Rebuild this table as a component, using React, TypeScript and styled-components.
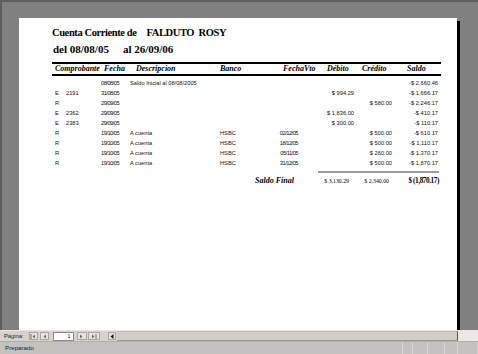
import React from "react";
import styled, { createGlobalStyle } from "styled-components";

const GlobalStyle = createGlobalStyle`
  html, body {
    margin: 0;
    padding: 0;
  }
  body {
    width: 478px;
    height: 354px;
    overflow: hidden;
    background: #808080;
  }
`;

const serif = `"Times New Roman", "Liberation Serif", Times, serif`;
const sans = `"Liberation Sans", Arial, sans-serif`;

const cols = "48px 28px 87px 47px 56px 38px 39px 46px";

const Window = styled.div`
  width: 478px;
  height: 354px;
  display: flex;
  flex-direction: column;
  overflow: hidden;
`;

const Viewer = styled.div`
  flex: 1;
  min-height: 0;
  background: #808080;
  border-top: 2px solid #5e5e5e;
  border-left: 2px solid #5e5e5e;
  padding: 16px 0 0 17px;
  overflow: hidden;
`;

const Page = styled.div`
  width: 438px;
  height: 560px;
  box-sizing: border-box;
  background: #fff;
  box-shadow: 3px 3px 0 #000;
  padding: 7px 0 0 33px;
  color: #000;
`;

const TitleLine = styled.div<{ $indent?: number; $size?: number; $spacing?: number }>`
  display: flex;
  font-family: ${serif};
  font-weight: 700;
  font-size: ${(p) => p.$size ?? 11}px;
  letter-spacing: ${(p) => p.$spacing ?? 0}px;
  line-height: 16px;
  white-space: pre;
  padding-left: ${(p) => p.$indent ?? 0}px;
`;

const Gap = styled.span<{ $w: number }>`
  display: inline-block;
  width: ${(p) => p.$w}px;
`;

const Table = styled.div`
  width: 389px;
  margin-top: 5px;
`;

const HeaderRow = styled.div`
  display: grid;
  grid-template-columns: ${cols};
  height: 10px;
  border-top: 2px solid #000;
  border-bottom: 2px solid #000;
  font-family: ${serif};
  font-style: italic;
  font-weight: 700;
  font-size: 8px;
  line-height: 10px;
  white-space: nowrap;
`;

const HeadCell = styled.div<{ $pad: number }>`
  padding-left: ${(p) => p.$pad}px;
`;

const Body = styled.div`
  padding-top: 2px;
`;

const Row = styled.div`
  display: grid;
  grid-template-columns: ${cols};
  height: 10px;
  font-family: ${sans};
  font-size: 5.7px;
  line-height: 10px;
  white-space: nowrap;
  color: #111;
`;

const Cell = styled.div<{ $left?: number; $right?: number; $tight?: boolean }>`
  display: flex;
  justify-content: ${(p) => (p.$right !== undefined ? "flex-end" : "flex-start")};
  padding-left: ${(p) => p.$left ?? 0}px;
  padding-right: ${(p) => p.$right ?? 0}px;
  letter-spacing: ${(p) => (p.$tight ? "-0.5px" : "0")};
`;

const Kind = styled.span`
  display: inline-block;
  width: 11px;
`;

const Totals = styled.div`
  display: grid;
  grid-template-columns: ${cols};
  margin-top: 3px;
`;

const Rule = styled.div`
  grid-column: 6 / 9;
  height: 2px;
  margin-right: 2px;
  background: #9c9c9c;
`;

const TotalCell = styled.div<{ $span?: string; $right: number; $bold?: boolean }>`
  grid-column: ${(p) => p.$span ?? "auto"};
  display: flex;
  justify-content: flex-end;
  padding-right: ${(p) => p.$right}px;
  height: 16px;
  font-family: ${serif};
  font-weight: ${(p) => (p.$bold ? 700 : 400)};
  font-size: ${(p) => (p.$bold ? 7.2 : 5.8)}px;
  letter-spacing: ${(p) => (p.$bold ? -0.4 : 0)}px;
  line-height: 16px;
  white-space: nowrap;
`;

const FinalLabel = styled(TotalCell)`
  font-style: italic;
  font-weight: 700;
  font-size: 8px;
  letter-spacing: 0;
`;

const NavBar = styled.div`
  height: 11px;
  flex: none;
  display: flex;
  align-items: center;
  background: #d6d3ce;
  border-top: 1px solid #e9e7e3;
  box-sizing: border-box;
  font-family: ${sans};
  font-size: 5.8px;
  color: #222;
`;

const NavLabel = styled.span`
  padding: 0 4px;
`;

const NavButton = styled.div<{ $w?: number; $ml?: number }>`
  width: ${(p) => p.$w ?? 9}px;
  height: 8px;
  margin-left: ${(p) => p.$ml ?? 1}px;
  box-sizing: border-box;
  border: 1px solid #a9a6a0;
  background: #e6e4e0;
  display: flex;
  align-items: center;
  justify-content: center;
`;

const PageBox = styled.div`
  width: 21px;
  height: 9px;
  margin-left: 4px;
  box-sizing: border-box;
  border: 1px solid #8a8a8a;
  background: #fff;
  display: flex;
  align-items: center;
  justify-content: flex-end;
  padding-right: 2px;
  font-size: 5.5px;
`;

const ScrollTrack = styled.div`
  flex: 1;
  align-self: stretch;
  margin-left: 1px;
  border-top: 1px solid #bdbab4;
  border-bottom: 1px solid #9c9a95;
  border-right: 1px solid #55534f;
  background: #d0cdc8;
`;

const Corner = styled.div`
  width: 20px;
  align-self: stretch;
  background: #ebe9e6;
`;

const StatusBar = styled.div`
  height: 13px;
  flex: none;
  display: flex;
  background: #c4c2be;
  border-top: 1px solid #b0aea9;
  box-sizing: border-box;
  font-family: ${sans};
  font-size: 6.2px;
  line-height: 12px;
  color: #222;
`;

const StatusPanel = styled.div<{ $w?: number }>`
  ${(p) => (p.$w ? `width: ${p.$w}px;` : "flex: 1;")}
  padding-left: 5px;
  box-sizing: border-box;
  border-right: 1px solid #d8d6d2;
`;

type Mov = {
  kind: string;
  num: string;
  fecha: string;
  desc: string;
  banco: string;
  vto: string;
  debito: string;
  credito: string;
  saldo: string;
};

const rows: Mov[] = [
  { kind: "", num: "", fecha: "08/08/05", desc: "Saldo Inicial al 08/08/2005", banco: "", vto: "", debito: "", credito: "", saldo: "-$ 2,660.46" },
  { kind: "E", num: "2191", fecha: "31/08/05", desc: "", banco: "", vto: "", debito: "$ 994.29", credito: "", saldo: "-$ 1,666.17" },
  { kind: "R", num: "", fecha: "29/09/05", desc: "", banco: "", vto: "", debito: "", credito: "$ 580.00", saldo: "-$ 2,246.17" },
  { kind: "E", num: "2362", fecha: "29/09/05", desc: "", banco: "", vto: "", debito: "$ 1,836.00", credito: "", saldo: "-$ 410.17" },
  { kind: "E", num: "2383", fecha: "29/09/05", desc: "", banco: "", vto: "", debito: "$ 300.00", credito: "", saldo: "-$ 110.17" },
  { kind: "R", num: "", fecha: "19/10/05", desc: "A cuenta", banco: "HSBC", vto: "02/12/05", debito: "", credito: "$ 500.00", saldo: "-$ 610.17" },
  { kind: "R", num: "", fecha: "19/10/05", desc: "A cuenta", banco: "HSBC", vto: "18/12/05", debito: "", credito: "$ 500.00", saldo: "-$ 1,110.17" },
  { kind: "R", num: "", fecha: "19/10/05", desc: "A cuenta", banco: "HSBC", vto: "05/11/05", debito: "", credito: "$ 260.00", saldo: "-$ 1,370.17" },
  { kind: "R", num: "", fecha: "19/10/05", desc: "A cuenta", banco: "HSBC", vto: "31/12/05", debito: "", credito: "$ 500.00", saldo: "-$ 1,870.17" },
];

const heads: [string, number][] = [
  ["Comprobante", 3],
  ["Fecha", 4],
  ["Descripcion", 8],
  ["Banco", 5],
  ["FechaVto", 21],
  ["Débito", 9],
  ["Crédito", 6],
  ["Saldo", 12],
];

const Arrow = ({ dir, bar }: { dir: "l" | "r"; bar?: boolean }) => (
  <svg width="6" height="5" viewBox="0 0 6 5">
    {dir === "l" ? (
      <>
        {bar && <rect x="0.5" y="0" width="1" height="5" fill="#6e6c68" />}
        <polygon points="5,0.5 2.5,2.5 5,4.5" fill="#6e6c68" />
      </>
    ) : (
      <>
        <polygon points="1,0.5 3.5,2.5 1,4.5" fill="#6e6c68" />
        {bar && <rect x="4.5" y="0" width="1" height="5" fill="#6e6c68" />}
      </>
    )}
  </svg>
);

export default function App() {
  return (
    <Window>
      <GlobalStyle />
      <Viewer>
        <Page>
          <TitleLine $size={10.5} $spacing={-0.4}>
            Cuenta Corriente de<Gap $w={10} />FALDUTO  ROSY
          </TitleLine>
          <TitleLine $indent={1}>
            del 08/08/05<Gap $w={14} />al 26/09/06
          </TitleLine>
          <Table>
            <HeaderRow>
              {heads.map(([label, pad]) => (
                <HeadCell key={label} $pad={pad}>
                  {label}
                </HeadCell>
              ))}
            </HeaderRow>
            <Body>
              {rows.map((r, i) => (
                <Row key={i}>
                  <Cell $left={3}>
                    <Kind>{r.kind}</Kind>
                    <span>{r.num}</span>
                  </Cell>
                  <Cell $left={1} $tight>{r.fecha}</Cell>
                  <Cell $left={2}>{r.desc}</Cell>
                  <Cell $left={5}>{r.banco}</Cell>
                  <Cell $right={20} $tight>{r.vto}</Cell>
                  <Cell $right={2}>{r.debito}</Cell>
                  <Cell $right={3}>{r.credito}</Cell>
                  <Cell $right={3}>{r.saldo}</Cell>
                </Row>
              ))}
            </Body>
            <Totals>
              <Rule />
              <FinalLabel $span="4 / 6" $right={24}>
                Saldo Final
              </FinalLabel>
              <TotalCell $right={7}>$ 3,130.29</TotalCell>
              <TotalCell $right={6}>$ 2,340.00</TotalCell>
              <TotalCell $right={2} $bold>
                $ (1,870.17)
              </TotalCell>
            </Totals>
          </Table>
        </Page>
      </Viewer>
      <NavBar>
        <NavLabel>Página:</NavLabel>
        <NavButton $ml={1}>
          <Arrow dir="l" bar />
        </NavButton>
        <NavButton $ml={2}>
          <Arrow dir="l" />
        </NavButton>
        <PageBox>1</PageBox>
        <NavButton $ml={3} $w={10}>
          <Arrow dir="r" />
        </NavButton>
        <NavButton $ml={1} $w={12}>
          <Arrow dir="r" bar />
        </NavButton>
        <NavButton $ml={8} $w={8}>
          <svg width="4" height="5" viewBox="0 0 4 5">
            <polygon points="3.5,0 0.5,2.5 3.5,5" fill="#111" />
          </svg>
        </NavButton>
        <ScrollTrack />
        <Corner />
      </NavBar>
      <StatusBar>
        <StatusPanel>Preparado</StatusPanel>
        <StatusPanel $w={10} />
        <StatusPanel $w={15} />
        <StatusPanel $w={17} />
        <StatusPanel $w={13} />
        <StatusPanel $w={20} />
      </StatusBar>
    </Window>
  );
}
